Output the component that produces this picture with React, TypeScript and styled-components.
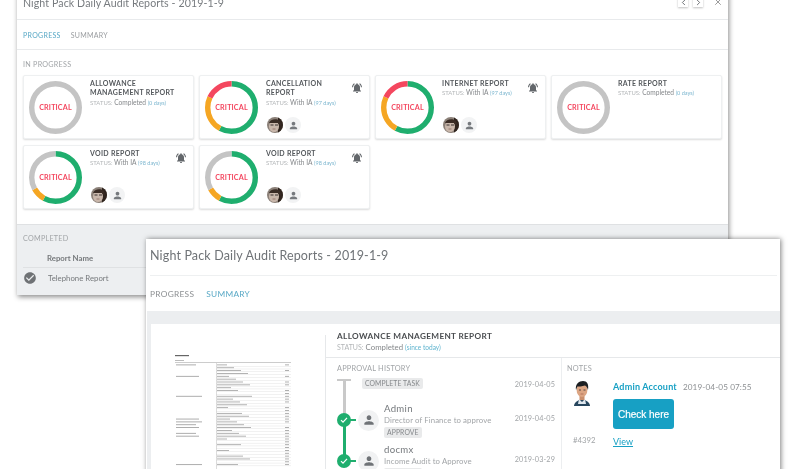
import React from 'react';
import styled, { createGlobalStyle } from 'styled-components';
import { ChevronLeft, ChevronRight, X } from 'lucide-react';
import { MdCheckCircle, MdNotificationsActive, MdPerson } from 'react-icons/md';

const GREEN = '#1fae6e';
const ORANGE = '#f5a623';
const RED = '#f4475f';
const GREY = '#c4c4c4';
const TEAL = '#17a0c4';

type Segment = { color: string; size: number };
type Report = {
  name: string;
  status: string;
  days: string;
  alert?: boolean;
  people?: boolean;
  segments: Segment[];
};

const done: Segment[] = [{ color: GREY, size: 100 }];
const mixed: Segment[] = [
  { color: GREEN, size: 58 },
  { color: ORANGE, size: 24 },
  { color: RED, size: 18 },
];
const voided: Segment[] = [
  { color: GREEN, size: 58 },
  { color: ORANGE, size: 9 },
  { color: GREY, size: 33 },
];

const reports: Report[] = [
  { name: 'ALLOWANCE\nMANAGEMENT REPORT', status: 'Completed', days: '(0 days)', segments: done },
  { name: 'CANCELLATION\nREPORT', status: 'With IA', days: '(97 days)', alert: true, people: true, segments: mixed },
  { name: 'INTERNET REPORT', status: 'With IA', days: '(97 days)', alert: true, people: true, segments: mixed },
  { name: 'RATE REPORT', status: 'Completed', days: '(0 days)', segments: done },
  { name: 'VOID REPORT', status: 'With IA', days: '(98 days)', alert: true, people: true, segments: voided },
  { name: 'VOID REPORT', status: 'With IA', days: '(98 days)', alert: true, people: true, segments: voided },
];

const docRows = [
  [1, 1, 1], [0, 1, 0], [0, 1, 1], [0, 1, 0], [1, 1, 1], [0, 1, 0], [0, 1, 1], [0, 1, 1], [0, 1, 0],
  [0, 1, 1], [0, 0, 1], [1, 1, 1], [0, 1, 1], [0, 1, 1], [0, 1, 0], [0, 1, 1], [0, 0, 1], [0, 1, 1],
  [0, 1, 1], [1, 1, 1], [1, 1, 1], [1, 1, 0], [1, 1, 1], [0, 1, 1], [1, 1, 1], [1, 1, 1], [0, 1, 1],
  [0, 0, 1], [0, 1, 1], [0, 0, 1], [0, 1, 1], [0, 0, 1], [0, 1, 1], [0, 1, 1], [0, 0, 1], [1, 1, 1],
];

function Ring({ segments }: { segments: Segment[] }) {
  let offset = 0;
  return (
    <RingBox>
      <svg width="53" height="53" viewBox="0 0 53 53">
        <g transform="rotate(-90 26.5 26.5)">
          {segments.map((s) => {
            const circle = (
              <circle
                key={s.color}
                cx="26.5"
                cy="26.5"
                r="23.8"
                fill="none"
                stroke={s.color}
                strokeWidth="5.4"
                pathLength={100}
                strokeDasharray={`${s.size} ${100 - s.size}`}
                strokeDashoffset={-offset}
              />
            );
            offset += s.size;
            return circle;
          })}
        </g>
      </svg>
      <RingLabel>CRITICAL</RingLabel>
    </RingBox>
  );
}

function Face() {
  return (
    <svg width="16" height="16" viewBox="0 0 16 16">
      <clipPath id="face-clip">
        <circle cx="8" cy="8" r="8" />
      </clipPath>
      <g clipPath="url(#face-clip)">
        <rect width="16" height="16" fill="#8b8078" />
        <rect x="11" width="5" height="16" fill="#2f241e" />
        <ellipse cx="7" cy="9.500" rx="5" ry="5.600" fill="#c9b7ab" />
        <path d="M2 6c1-4 8-5 11-2l1 5-3-3-8 0z" fill="#3a2c25" />
        <path d="M3.500 8h3M8 8h3" stroke="#3b3230" strokeWidth="1" />
        <path d="M5.500 12h3" stroke="#8d6a62" strokeWidth="0.800" />
      </g>
    </svg>
  );
}

function ReportCard({ report }: { report: Report }) {
  return (
    <Card>
      <Ring segments={report.segments} />
      <CardBody>
        <CardTitle>{report.name}</CardTitle>
        <StatusLine>
          <StatusKey>STATUS:</StatusKey> {report.status} <Days>{report.days}</Days>
        </StatusLine>
        {report.people && (
          <People>
            <Face />
            <PersonDot>
              <MdPerson size={11} />
            </PersonDot>
          </People>
        )}
      </CardBody>
      {report.alert && (
        <Bell>
          <MdNotificationsActive size={12} />
        </Bell>
      )}
    </Card>
  );
}

function DocThumb() {
  return (
    <svg width="118" height="114" viewBox="0 0 118 114">
      <rect x="0" y="0" width="14" height="1.200" fill="#666" />
      <rect x="0" y="5" width="9" height="0.800" fill="#aaa" />
      <rect x="0" y="7.500" width="116" height="0.500" fill="#999" />
      <rect x="41" y="8" width="0.500" height="106" fill="#bbb" />
      {docRows.map((r, i) => {
        const y = 9.500 + i * 2.850;
        return (
          <g key={i}>
            <rect x="41" y={y + 1.500} width="75" height="0.300" fill="#d0d0d0" />
            {r[0] === 1 && <rect x="1" y={y} width={20 + (i % 3) * 3} height="0.800" fill="#999" />}
            {r[1] === 1 && <rect x="42" y={y} width={10 + ((i * 7) % 26)} height="0.800" fill="#a0a0a0" />}
            {r[2] === 1 && <rect x="110" y={y} width="4" height="0.800" fill="#9c9c9c" />}
          </g>
        );
      })}
    </svg>
  );
}

function Portrait() {
  return (
    <svg width="18" height="25" viewBox="0 0 18 25">
      <path d="M1 25c0-3 3-5 5-6h6c2 1 5 3 5 6z" fill="#27465e" />
      <path d="M6 18l3 3 3-3 1 5H5z" fill="#dfe7ee" />
      <rect x="6.500" y="13" width="5" height="6" fill="#c98e6c" />
      <ellipse cx="9" cy="9" rx="5.400" ry="7" fill="#dca583" />
      <path d="M3 9C2 3 6 0 10 0s6 3 5 9c-1-3-2-4-3-4.500-3 1-6 1-7.500 1C4 6 3.500 7.500 3 9z" fill="#1c1f22" />
      <path d="M6 9h2M10.500 9h2" stroke="#333" strokeWidth="0.800" />
      <path d="M7.500 13h3" stroke="#a5604c" strokeWidth="0.700" />
    </svg>
  );
}

function HistoryRow({ name, role, date, tag, last }: { name: string; role: string; date: string; tag: string; last?: boolean }) {
  return (
    <TimelineRow>
      <Marker>
        <CheckDot>
          <svg width="8" height="8" viewBox="0 0 8 8">
            <path d="M1 4.200l2 2 4-4.400" fill="none" stroke="#fff" strokeWidth="1.200" />
          </svg>
        </CheckDot>
        <Stub />
        {!last && <GreenLine />}
      </Marker>
      <PersonCircle>
        <MdPerson size={14} />
      </PersonCircle>
      <Who>
        <WhoName>{name}</WhoName>
        <WhoRole>{role}</WhoRole>
        <Tag>{tag}</Tag>
      </Who>
      <RowDate $down={7}>{date}</RowDate>
    </TimelineRow>
  );
}

export default function App() {
  return (
    <>
      <GlobalStyle />
      <Desk>
        <BackWindow>
          <BackHeader>
            <BackTitle>Night Pack Daily Audit Reports - 2019-1-9</BackTitle>
            <NavButton>
              <ChevronLeft size={9} strokeWidth={2.2} />
            </NavButton>
            <NavButton>
              <ChevronRight size={9} strokeWidth={2.2} />
            </NavButton>
            <CloseButton>
              <X size={10} />
            </CloseButton>
          </BackHeader>
          <BackTabs>
            <SmallTab $active>PROGRESS</SmallTab>
            <SmallTab>SUMMARY</SmallTab>
          </BackTabs>
          <Progress>
            <SectionLabel>IN PROGRESS</SectionLabel>
            <CardGrid>
              {reports.map((r, i) => (
                <ReportCard key={i} report={r} />
              ))}
            </CardGrid>
          </Progress>
          <Completed>
            <SectionLabel>COMPLETED</SectionLabel>
            <CompletedHead>Report Name</CompletedHead>
            <CompletedRow>
              <MdCheckCircle size={14} color="#6f7275" />
              <span>Telephone Report</span>
            </CompletedRow>
          </Completed>
        </BackWindow>

        <FrontWindow>
          <FrontHeader>Night Pack Daily Audit Reports - 2019-1-9</FrontHeader>
          <FrontTabs>
            <BigTab>PROGRESS</BigTab>
            <BigTab $active>SUMMARY</BigTab>
          </FrontTabs>
          <Band>
            <Sheet>
              <Preview>
                <DocThumb />
              </Preview>
              <Detail>
                <DetailHead>
                  <DetailTitle>ALLOWANCE MANAGEMENT REPORT</DetailTitle>
                  <DetailStatus>
                    <StatusKey>STATUS:</StatusKey> Completed <DetailSince>(since today)</DetailSince>
                  </DetailStatus>
                </DetailHead>
                <Columns>
                  <History>
                    <ColumnLabel>APPROVAL HISTORY</ColumnLabel>
                    <StartRow>
                      <Marker>
                        <StartCap />
                        <GreyLine />
                      </Marker>
                      <Tag>COMPLETE TASK</Tag>
                      <RowDate $down={2}>2019-04-05</RowDate>
                    </StartRow>
                    <HistoryRow name="Admin" role="Director of Finance to approve" date="2019-04-05" tag="APPROVE" />
                    <HistoryRow name="docmx" role="Income Audit to Approve" date="2019-03-29" tag="APPROVE" last />
                  </History>
                  <Notes>
                    <ColumnLabel>NOTES</ColumnLabel>
                    <NoteGrid>
                      <NoteSide>
                        <Portrait />
                        <NoteId>#4392</NoteId>
                      </NoteSide>
                      <NoteMain>
                        <NoteHead>
                          <NoteAuthor>Admin Account</NoteAuthor>
                          <NoteDate>2019-04-05 07:55</NoteDate>
                        </NoteHead>
                        <CheckButton>Check here</CheckButton>
                        <ViewLink>View</ViewLink>
                      </NoteMain>
                    </NoteGrid>
                  </Notes>
                </Columns>
              </Detail>
            </Sheet>
          </Band>
        </FrontWindow>
      </Desk>
    </>
  );
}

const GlobalStyle = createGlobalStyle`
  html, body {
    margin: 0;
    padding: 0;
    background: #fff;
  }
  * {
    box-sizing: border-box;
  }
  body {
    font-family: Lato, "Noto Sans", sans-serif;
    color: #6b6f73;
  }
`;

const Desk = styled.div`
  position: relative;
  width: 800px;
  height: 469px;
  overflow: hidden;
  background: #fff;
  filter: blur(0.3px);
`;

const BackWindow = styled.section`
  position: absolute;
  left: 17px;
  top: -9px;
  width: 711px;
  height: 304px;
  background: #fff;
  display: flex;
  flex-direction: column;
  box-shadow: 1px 2px 5px rgba(0, 0, 0, 0.45);
`;

const BackHeader = styled.header`
  height: 29px;
  flex: none;
  display: flex;
  align-items: center;
  padding: 0 5px 6px 6px;
  border-bottom: 1px solid #e8eaec;
`;

const BackTitle = styled.h2`
  margin: 2px auto 0 0;
  font-size: 10.600px;
  font-weight: 400;
  color: #777b7f;
  letter-spacing: 0.1px;
`;

const NavButton = styled.button`
  width: 10px;
  height: 10px;
  margin-left: 5px;
  padding: 0;
  border: 0;
  background: #fff;
  color: #55595d;
  display: flex;
  align-items: center;
  justify-content: center;
  box-shadow: 0 1px 2px rgba(0, 0, 0, 0.25);
`;

const CloseButton = styled(NavButton)`
  margin: 0 0 0 10px;
  box-shadow: none;
  color: #888;
`;

const BackTabs = styled.nav`
  height: 30px;
  flex: none;
  display: flex;
  align-items: center;
  gap: 10px;
  padding: 1px 0 0 6px;
  border-bottom: 1px solid #e8eaec;
`;

const SmallTab = styled.span<{ $active?: boolean }>`
  font-size: 7px;
  letter-spacing: 0.3px;
  color: ${(p) => (p.$active ? '#5aa9c6' : '#9a9da0')};
`;

const Progress = styled.div`
  flex: none;
  height: 174px;
  padding: 10px 6px 0;
`;

const SectionLabel = styled.div`
  font-size: 7.200px;
  line-height: 10px;
  letter-spacing: 0.25px;
  color: #a2a5a8;
`;

const CardGrid = styled.div`
  display: grid;
  grid-template-columns: repeat(4, 171px);
  grid-auto-rows: 64.500px;
  gap: 5.500px 5px;
  margin-top: 4.500px;
`;

const Card = styled.article`
  display: flex;
  align-items: flex-start;
  background: #fff;
  border: 1px solid #eef0f1;
  border-radius: 2px;
  box-shadow: 0 1px 2px rgba(0, 0, 0, 0.14);
  padding: 5px 6px 5px 5px;
`;

const RingBox = styled.div`
  position: relative;
  flex: none;
  width: 53px;
  height: 53px;
  margin-right: 8px;
`;

const RingLabel = styled.span`
  position: absolute;
  inset: 0;
  display: flex;
  align-items: center;
  justify-content: center;
  font-size: 7.200px;
  font-weight: 700;
  letter-spacing: 0.15px;
  color: ${RED};
`;

const CardBody = styled.div`
  flex: 1;
  min-width: 0;
  height: 100%;
  display: flex;
  flex-direction: column;
  margin-top: -2px;
`;

const CardTitle = styled.h3`
  margin: 0;
  font-size: 7px;
  line-height: 9.500px;
  font-weight: 700;
  letter-spacing: 0.3px;
  color: #55595d;
  white-space: pre-line;
`;

const StatusLine = styled.div`
  font-size: 6.600px;
  line-height: 9.500px;
  white-space: nowrap;
  color: #85888b;
`;

const StatusKey = styled.span`
  color: #b3b6b8;
  font-size: 0.9em;
`;

const Days = styled.span`
  color: #7cb6cf;
  font-size: 0.84em;
`;

const People = styled.div`
  margin-top: auto;
  margin-bottom: -2px;
  display: flex;
  align-items: center;
  gap: 2px;
  padding-left: 1px;
`;

const PersonDot = styled.span`
  width: 16px;
  height: 16px;
  border-radius: 50%;
  background: #f2f3f4;
  color: #75797d;
  display: flex;
  align-items: center;
  justify-content: center;
`;

const Bell = styled.span`
  flex: none;
  color: #63676b;
  display: flex;
  margin-top: 1px;
`;

const Completed = styled.div`
  flex: 1;
  background: #edeff1;
  border-top: 1px solid #dfe1e3;
  padding: 9px 6px 0;
`;

const CompletedHead = styled.div`
  font-size: 7.800px;
  font-weight: 700;
  line-height: 10px;
  color: #76797c;
  margin-top: 9px;
  padding: 0 0 4px 24px;
  border-bottom: 1px solid #dfe1e3;
`;

const CompletedRow = styled.div`
  display: flex;
  align-items: center;
  gap: 11px;
  height: 20px;
  font-size: 7.800px;
  color: #76797c;
`;

const FrontWindow = styled.section`
  position: absolute;
  left: 146px;
  top: 239px;
  width: 634px;
  height: 240px;
  background: #fff;
  box-shadow: 1px 0 5px rgba(0, 0, 0, 0.5);
`;

const FrontHeader = styled.h1`
  margin: 0 3px 0 4px;
  height: 37px;
  display: flex;
  align-items: center;
  padding-bottom: 4px;
  font-size: 12.500px;
  font-weight: 400;
  letter-spacing: 0.15px;
  color: #6f7377;
  border-bottom: 1px solid #eef0f1;
`;

const FrontTabs = styled.nav`
  height: 35px;
  display: flex;
  align-items: center;
  gap: 12px;
  padding-left: 4px;
`;

const BigTab = styled.span<{ $active?: boolean }>`
  font-size: 8.300px;
  letter-spacing: 0.3px;
  color: ${(p) => (p.$active ? '#5aa9c6' : '#8d9093')};
`;

const Band = styled.div`
  margin-left: 1px;
  height: 158px;
  background: #eceef0;
  padding: 13px 0 0 4px;
`;

const Sheet = styled.div`
  height: 100%;
  background: #fff;
  display: flex;
`;

const Preview = styled.div`
  width: 174px;
  flex: none;
  padding: 31px 0 0 24px;
`;

const Detail = styled.div`
  flex: 1;
  min-width: 0;
  display: flex;
  flex-direction: column;
  border-left: 1px solid #e6e8ea;
  margin-top: 11px;
`;

const DetailHead = styled.div`
  height: 23px;
  padding-left: 11px;
  border-bottom: 1px solid #e6e8ea;
`;

const DetailTitle = styled.h2`
  margin: -5px 0 0;
  font-size: 8.200px;
  line-height: 13px;
  font-weight: 700;
  letter-spacing: 0.35px;
  color: #4a4d50;
`;

const DetailStatus = styled.div`
  margin-top: -1px;
  font-size: 7.800px;
  line-height: 10px;
  color: #85888b;
`;

const DetailSince = styled.span`
  color: #5fb4cf;
  font-size: 0.84em;
`;

const Columns = styled.div`
  flex: 1;
  display: flex;
  min-height: 0;
`;

const History = styled.div`
  width: 236px;
  flex: none;
  padding: 6px 6px 0 11px;
  border-right: 1px solid #eceef0;
`;

const ColumnLabel = styled.div`
  font-size: 7.400px;
  line-height: 10px;
  letter-spacing: 0.2px;
  color: #a2a5a8;
`;

const StartRow = styled.div`
  display: flex;
  align-items: flex-start;
  height: 29px;
  margin-top: 3px;
`;

const TimelineRow = styled.div`
  display: flex;
  align-items: flex-start;
  height: 41px;
`;

const Marker = styled.div`
  position: relative;
  flex: none;
  width: 25px;
  height: 100%;
`;

const StartCap = styled.span`
  position: absolute;
  left: 0;
  top: 2px;
  width: 14px;
  height: 2px;
  background: #c9c9c9;
`;

const GreyLine = styled.span`
  position: absolute;
  left: 5.500px;
  top: 4px;
  bottom: -9px;
  width: 3px;
  background: #c9c9c9;
`;

const CheckDot = styled.span`
  position: absolute;
  left: 0;
  top: 7px;
  width: 14px;
  height: 14px;
  border-radius: 50%;
  background: ${GREEN};
  display: flex;
  align-items: center;
  justify-content: center;
  z-index: 1;
`;

const Stub = styled.span`
  position: absolute;
  left: 13px;
  top: 13px;
  width: 6px;
  height: 2px;
  background: ${GREEN};
`;

const GreenLine = styled.span`
  position: absolute;
  left: 5.500px;
  top: 14px;
  height: 41px;
  width: 3px;
  background: ${GREEN};
`;

const PersonCircle = styled.span`
  flex: none;
  width: 21px;
  height: 21px;
  margin: 3.500px 0 0 -4px;
  border-radius: 50%;
  background: #f1f2f3;
  color: #6f7377;
  display: flex;
  align-items: center;
  justify-content: center;
`;

const Who = styled.div`
  flex: 1;
  min-width: 0;
  padding-left: 5px;
  margin-top: -3px;
`;

const WhoName = styled.div`
  font-size: 9.600px;
  line-height: 12px;
  letter-spacing: 0.3px;
  color: #75797d;
`;

const WhoRole = styled.div`
  font-size: 7.800px;
  line-height: 11px;
  letter-spacing: 0.1px;
  color: #a2a5a8;
  white-space: nowrap;
`;

const Tag = styled.span`
  display: block;
  width: fit-content;
  margin-top: 1px;
  padding: 0 3px;
  height: 11px;
  font-size: 6.800px;
  line-height: 11px;
  letter-spacing: 0.1px;
  border-radius: 2px;
  background: #e9eaeb;
  color: #85888b;
`;

const RowDate = styled.span<{ $down: number }>`
  margin-left: auto;
  margin-top: ${(p) => p.$down}px;
  flex: none;
  font-size: 7.300px;
  line-height: 12px;
  letter-spacing: 0.1px;
  color: #a2a5a8;
  white-space: nowrap;
`;

const Notes = styled.div`
  flex: 1;
  min-width: 0;
  padding: 6px 0 0 5px;
`;

const NoteGrid = styled.div`
  display: flex;
  margin-top: 7px;
`;

const NoteSide = styled.div`
  width: 46px;
  flex: none;
  padding-left: 6px;
  display: flex;
  flex-direction: column;
  align-items: flex-start;
`;

const NoteId = styled.span`
  margin-top: 29px;
  font-size: 7.800px;
  line-height: 10px;
  color: #a2a5a8;
`;

const NoteMain = styled.div`
  flex: 1;
  min-width: 0;
`;

const NoteHead = styled.div`
  display: flex;
  align-items: baseline;
  gap: 6px;
  line-height: 12px;
  white-space: nowrap;
`;

const NoteAuthor = styled.span`
  font-size: 9px;
  font-weight: 700;
  letter-spacing: 0.2px;
  color: ${TEAL};
`;

const NoteDate = styled.span`
  font-size: 8.200px;
  letter-spacing: 0.1px;
  color: #8d9093;
`;

const CheckButton = styled.button`
  display: block;
  width: 61px;
  height: 30px;
  margin-top: 6px;
  padding: 0;
  border: 0;
  border-radius: 3px;
  background: ${TEAL};
  color: #fff;
  font-family: "Liberation Sans", Arial, sans-serif;
  font-size: 10px;
  font-weight: 400;
  -webkit-text-stroke: 0.2px #fff;
`;

const ViewLink = styled.a`
  display: inline-block;
  margin-top: 6px;
  font-size: 9px;
  line-height: 12px;
  color: ${TEAL};
  text-decoration: underline;
`;
